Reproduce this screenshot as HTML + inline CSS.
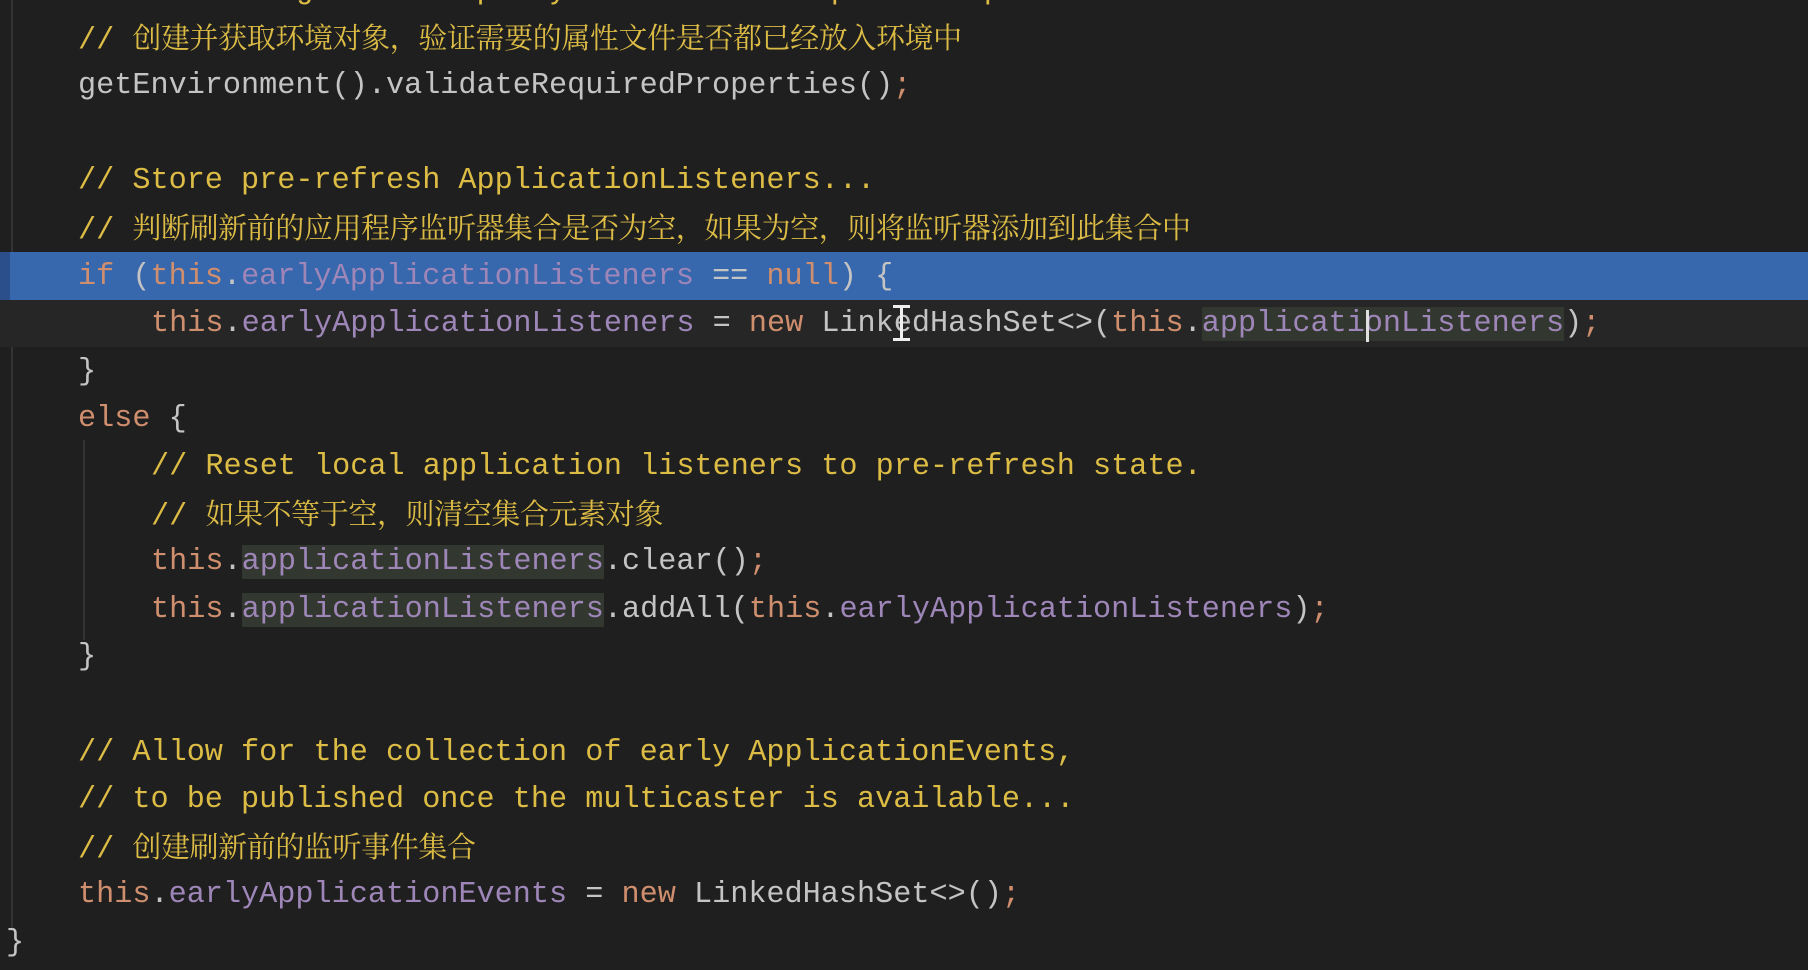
<!DOCTYPE html>
<html><head><meta charset="utf-8"><style>
html,body{margin:0;padding:0;background:#1f1f1f;width:1808px;height:970px;overflow:hidden}
#ed{position:relative;width:1808px;height:970px;background:#1f1f1f;font-family:"Liberation Mono",monospace;font-size:30.2px}
.l{position:absolute;left:0;height:47.6px;line-height:47.6px;white-space:pre;color:#c4c4c4;width:1808px}
.c{color:#dcbc45}
.z{font-family:"Liberation Serif","Noto Serif CJK SC",serif;font-size:29px;letter-spacing:-0.4px;color:#dcbc45}
.k{color:#cf8e6d}
.f{color:#9e86b8}
.u{background:#32382f}
.g{position:absolute;width:2px;background:#333336}
</style></head><body><div id="ed">
<div class="g" style="left:11px;top:0;height:930px"></div>
<div style="position:absolute;left:0;top:252px;width:1808px;height:48px;background:#3767ad"></div>
<div style="position:absolute;left:0;top:252px;width:10px;height:48px;background:#2a4f8a"></div>
<div style="position:absolute;left:0;top:300px;width:1808px;height:47px;background:#262626"></div>
<div class="g" style="left:83px;top:440px;height:200px"></div>
<div class="l" style="top:-32px;padding-left:78px"><span class="c">// See ConfigurablePropertyResolver#setRequiredProperties</span></div>
<div class="l" style="top:15.6px;padding-left:78px"><span class="c">// </span><span class="z">创建并获取环境对象，验证需要的属性文件是否都已经放入环境中</span></div>
<div class="l" style="top:63.2px;padding-left:78px">getEnvironment().validateRequiredProperties()<span class="k">;</span></div>
<div class="l" style="top:158.4px;padding-left:78px"><span class="c">// Store pre-refresh ApplicationListeners...</span></div>
<div class="l" style="top:206px;padding-left:78px"><span class="c">// </span><span class="z">判断刷新前的应用程序监听器集合是否为空，如果为空，则将监听器添加到此集合中</span></div>
<div class="l" style="top:253.6px;padding-left:78px"><span class="k">if</span> (<span class="k">this</span>.<span class="f">earlyApplicationListeners</span> == <span class="k">null</span>) {</div>
<div class="l" style="top:301.2px;padding-left:151px"><span class="k">this</span>.<span class="f">earlyApplicationListeners</span> = <span class="k">new</span> LinkedHashSet&lt;&gt;(<span class="k">this</span>.<span class="f u">applicationListeners</span>)<span class="k">;</span></div>
<div style="position:absolute;left:1366px;top:310px;width:3px;height:32px;background:#e0e0e0"></div>
<div style="position:absolute;left:900px;top:305px;width:3px;height:36px;background:#eee"></div>
<div style="position:absolute;left:893px;top:305px;width:17px;height:3px;background:#eee"></div>
<div style="position:absolute;left:893px;top:338px;width:17px;height:3px;background:#eee"></div>
<div class="l" style="top:348.8px;padding-left:78px">}</div>
<div class="l" style="top:396.4px;padding-left:78px"><span class="k">else</span> {</div>
<div class="l" style="top:444px;padding-left:151px"><span class="c">// Reset local application listeners to pre-refresh state.</span></div>
<div class="l" style="top:491.6px;padding-left:151px"><span class="c">// </span><span class="z">如果不等于空，则清空集合元素对象</span></div>
<div class="l" style="top:539.2px;padding-left:151px"><span class="k">this</span>.<span class="f u">applicationListeners</span>.clear()<span class="k">;</span></div>
<div class="l" style="top:586.8px;padding-left:151px"><span class="k">this</span>.<span class="f u">applicationListeners</span>.addAll(<span class="k">this</span>.<span class="f">earlyApplicationListeners</span>)<span class="k">;</span></div>
<div class="l" style="top:634.4px;padding-left:78px">}</div>
<div class="l" style="top:729.6px;padding-left:78px"><span class="c">// Allow for the collection of early ApplicationEvents,</span></div>
<div class="l" style="top:777.2px;padding-left:78px"><span class="c">// to be published once the multicaster is available...</span></div>
<div class="l" style="top:824.8px;padding-left:78px"><span class="c">// </span><span class="z">创建刷新前的监听事件集合</span></div>
<div class="l" style="top:872.4px;padding-left:78px"><span class="k">this</span>.<span class="f">earlyApplicationEvents</span> = <span class="k">new</span> LinkedHashSet&lt;&gt;()<span class="k">;</span></div>
<div class="l" style="top:920px;padding-left:6px">}</div>
</div></body></html>
